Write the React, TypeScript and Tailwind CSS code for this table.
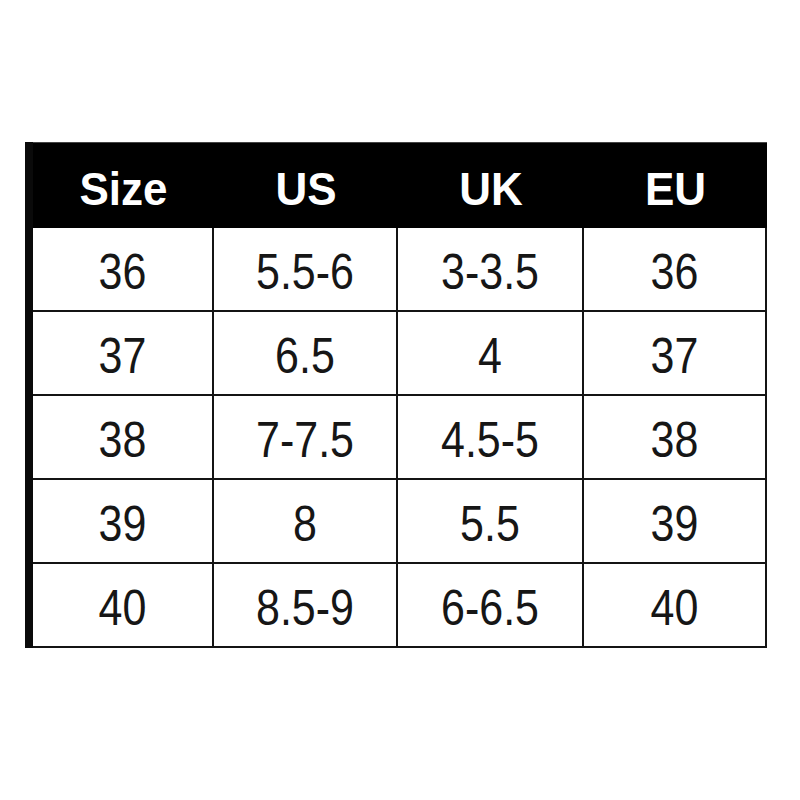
import React from 'react';

const headers = ['Size', 'US', 'UK', 'EU'];

const rows: string[][] = [
  ['36', '5.5-6', '3-3.5', '36'],
  ['37', '6.5', '4', '37'],
  ['38', '7-7.5', '4.5-5', '38'],
  ['39', '8', '5.5', '39'],
  ['40', '8.5-9', '6-6.5', '40'],
];

// column widths incl. right divider
const colWidths = ['w-[181px]', 'w-[184px]', 'w-[186px]', 'w-[183px]'];

const App: React.FC = () => {
  return (
    <div className="w-[800px] h-[800px] bg-white pt-[142px] pl-[25px] font-['Liberation_Sans',Arial,sans-serif]">
      <div className="w-[742px] border-l-[8px] border-[#0a0a0a]">
        <div className="flex h-[86px] bg-black border-t border-[#444]">
          {headers.map((h, i) => (
            <div
              key={h}
              className={`${colWidths[i]} flex items-center justify-center pt-[6px]`}
            >
              <span className="text-white font-bold text-[44px] leading-none scale-y-[1.05]">{h}</span>
            </div>
          ))}
        </div>
        {rows.map((row, r) => (
          <div key={r} className="flex h-[84px]">
            {row.map((cell, c) => (
              <div
                key={c}
                className={`${colWidths[c]} flex items-center justify-center pt-[6px] border-r-[2px] border-b-[2px] border-[#141414]`}
              >
                <span className="text-[#161616] text-[43px] leading-none scale-y-[1.15]">{cell}</span>
              </div>
            ))}
          </div>
        ))}
      </div>
    </div>
  );
};

export default App;
